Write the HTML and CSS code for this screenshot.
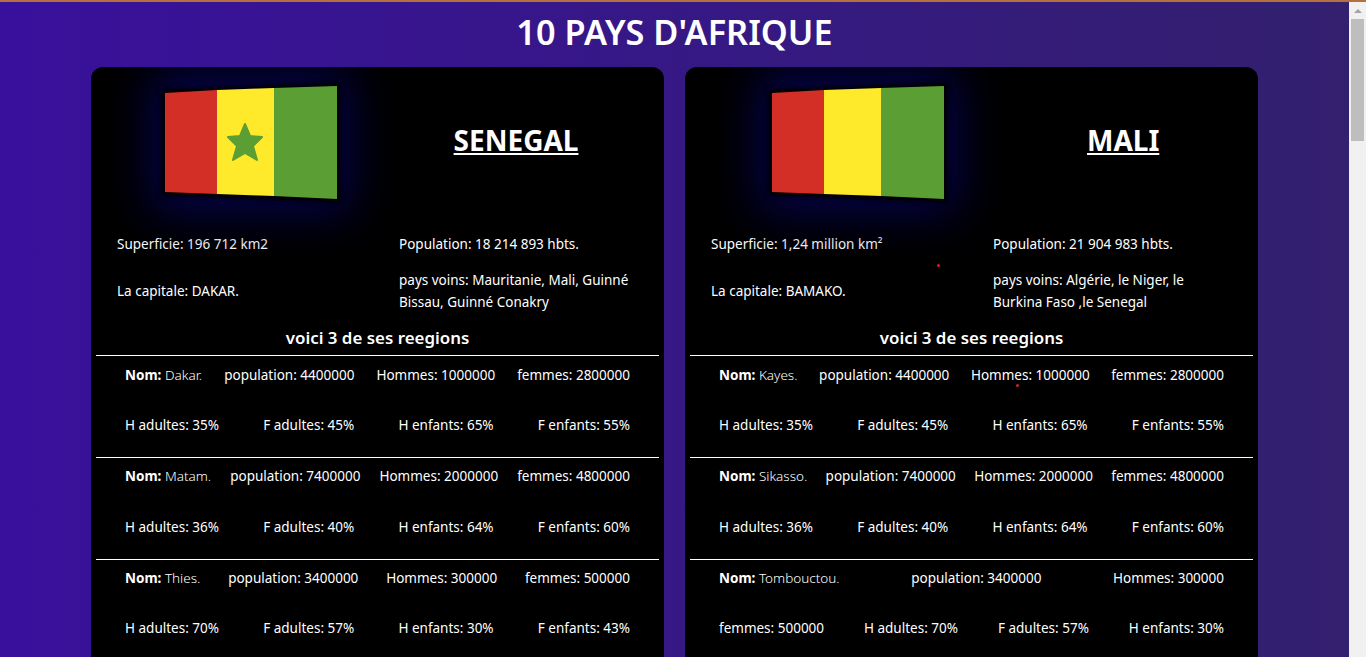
FILE: index.html
```html
<!DOCTYPE html>
<html lang="fr">

<head>
    <meta charset="UTF-8">
    <meta name="viewport" content="width=device-width, initial-scale=1.0">
    <title>10 pays d'Afrique</title>
    <link rel="stylesheet" href="styles.css">
</head>

<body>
    <div class="page">
        <h1 class="page-title">10 PAYS D'AFRIQUE</h1>
        <main class="cards">
            <section class="card">
                <header class="card-head">
                    <div class="flag">
                        <svg viewBox="0 0 172 114" width="172" height="114">
                            <polygon class="flag-ring" points="0,8 172,1 172,114 0,107"/>
                            <polygon points="0,8 52,5 52,109 0,107" fill="#d32f27"/>
                            <polygon points="52,5 109,3 109,111 52,109" fill="#fee92b"/>
                            <polygon points="109,3 172,1 172,114 109,111" fill="#5b9f34"/>
                            <path d="M80 39 L85 51 L97 52 L88 61 L92 75 L80 68 L68 75 L72 61 L63 52 L75 51 Z" fill="#5b9f34" stroke="#5b9f34" stroke-linejoin="round" stroke-width="2"/>
                        </svg>
                    </div>
                    <h2 class="country">SENEGAL</h2>
                </header>
                <div class="facts">
                    <p>Superficie: 196 712 km2</p>
                    <p>Population: 18 214 893 hbts.</p>
                    <p>La capitale: DAKAR.</p>
                    <p>pays voins: Mauritanie, Mali, Guinné Bissau, Guinné Conakry</p>
                </div>
                <h3 class="regions-title">voici 3 de ses reegions</h3>
                <div class="region">
                    <div class="region-row">
                        <span><b>Nom:</b> <i>Dakar.</i></span>
                        <span>population: 4400000</span>
                        <span>Hommes: 1000000</span>
                        <span>femmes: 2800000</span>
                    </div>
                    <div class="region-row">
                        <span>H adultes: 35%</span>
                        <span>F adultes: 45%</span>
                        <span>H enfants: 65%</span>
                        <span>F enfants: 55%</span>
                    </div>
                </div>
                <div class="region">
                    <div class="region-row">
                        <span><b>Nom:</b> <i>Matam.</i></span>
                        <span>population: 7400000</span>
                        <span>Hommes: 2000000</span>
                        <span>femmes: 4800000</span>
                    </div>
                    <div class="region-row">
                        <span>H adultes: 36%</span>
                        <span>F adultes: 40%</span>
                        <span>H enfants: 64%</span>
                        <span>F enfants: 60%</span>
                    </div>
                </div>
                <div class="region">
                    <div class="region-row">
                        <span><b>Nom:</b> <i>Thies.</i></span>
                        <span>population: 3400000</span>
                        <span>Hommes: 300000</span>
                        <span>femmes: 500000</span>
                    </div>
                    <div class="region-row">
                        <span>H adultes: 70%</span>
                        <span>F adultes: 57%</span>
                        <span>H enfants: 30%</span>
                        <span>F enfants: 43%</span>
                    </div>
                </div>
            </section>

            <section class="card">
                <span class="dot dot-one"></span>
                <span class="dot dot-two"></span>
                <header class="card-head">
                    <div class="flag">
                        <svg viewBox="0 0 172 114" width="172" height="114">
                            <polygon class="flag-ring" points="0,8 172,1 172,114 0,107"/>
                            <polygon points="0,8 52,5 52,109 0,107" fill="#d32f27"/>
                            <polygon points="52,5 109,3 109,111 52,109" fill="#fee92b"/>
                            <polygon points="109,3 172,1 172,114 109,111" fill="#5b9f34"/>
                        </svg>
                    </div>
                    <h2 class="country">MALI</h2>
                </header>
                <div class="facts">
                    <p>Superficie: 1,24 million km²</p>
                    <p>Population: 21 904 983 hbts.</p>
                    <p>La capitale: BAMAKO.</p>
                    <p>pays voins: Algérie, le Niger, le Burkina Faso ,le Senegal</p>
                </div>
                <h3 class="regions-title">voici 3 de ses reegions</h3>
                <div class="region">
                    <div class="region-row">
                        <span><b>Nom:</b> <i>Kayes.</i></span>
                        <span>population: 4400000</span>
                        <span>Hommes: 1000000</span>
                        <span>femmes: 2800000</span>
                    </div>
                    <div class="region-row">
                        <span>H adultes: 35%</span>
                        <span>F adultes: 45%</span>
                        <span>H enfants: 65%</span>
                        <span>F enfants: 55%</span>
                    </div>
                </div>
                <div class="region">
                    <div class="region-row">
                        <span><b>Nom:</b> <i>Sikasso.</i></span>
                        <span>population: 7400000</span>
                        <span>Hommes: 2000000</span>
                        <span>femmes: 4800000</span>
                    </div>
                    <div class="region-row">
                        <span>H adultes: 36%</span>
                        <span>F adultes: 40%</span>
                        <span>H enfants: 64%</span>
                        <span>F enfants: 60%</span>
                    </div>
                </div>
                <div class="region">
                    <div class="region-row">
                        <span><b>Nom:</b> <i>Tombouctou.</i></span>
                        <span>population: 3400000</span>
                        <span>Hommes: 300000</span>
                    </div>
                    <div class="region-row">
                        <span>femmes: 500000</span>
                        <span>H adultes: 70%</span>
                        <span>F adultes: 57%</span>
                        <span>H enfants: 30%</span>
                    </div>
                </div>
            </section>
        </main>
    </div>
    <div class="scrollbar">
        <span class="scroll-arrow"></span>
        <span class="scroll-thumb"></span>
    </div>
</body>

</html>
```

FILE: styles.css
```css
* {
    box-sizing: border-box;
}

html,
body {
    height: 100%;
}

body {
    margin: 0;
    display: flex;
    overflow: hidden;
    border-top: 2px solid #b5703f;
    font-family: "Noto Sans", "Open Sans", sans-serif;
    font-size: 13.5px;
    color: #fff;
    background-color: #f1f1f1;
}

.page {
    flex: 1;
    min-width: 0;
    overflow: hidden;
    background: linear-gradient(90deg, #39109c, #33206e);
}

.page-title {
    margin: 0;
    padding-top: 8px;
    height: 65px;
    text-align: center;
    font-size: 34.3px;
    line-height: 44px;
    font-weight: 600;
}

.cards {
    display: grid;
    grid-template-columns: 573px 573px;
    justify-content: center;
    gap: 21px;
}

.card {
    position: relative;
    height: 700px;
    padding: 0 5px;
    overflow: hidden;
    background-color: #000;
    border-radius: 12px 12px 0 0;
}

.card-head {
    display: flex;
    justify-content: space-around;
    align-items: flex-start;
    height: 157px;
    padding: 18px 22px 0 10px;
}

.flag {
    position: relative;
    width: 172px;
    height: 114px;
}

.flag::before {
    content: "";
    position: absolute;
    inset: 4px;
    box-shadow: 0 0 44px 18px #05034a;
}

.flag svg {
    position: relative;
    display: block;
    overflow: visible;
    filter: blur(0.6px);
}

.flag-ring {
    fill: #000;
    stroke: #000;
    stroke-width: 7;
    stroke-linejoin: round;
    filter: blur(2px);
}

.country {
    margin: 0;
    padding-top: 37px;
    font-size: 28px;
    line-height: 36px;
    font-weight: 700;
    text-decoration: underline;
}

.facts {
    display: grid;
    grid-template-columns: 282px 238px;
    align-items: center;
    padding-left: 21px;
    line-height: 22px;
}

.facts p {
    margin: 0;
    padding: 9px 0;
}

.facts p:nth-child(n+3) {
    padding: 5px 0;
}

.regions-title {
    margin: 0;
    height: 38px;
    padding-top: 8px;
    text-align: center;
    font-size: 16.9px;
    line-height: 24px;
    font-weight: 600;
    border-bottom: 1px solid #fff;
}

.region {
    height: 101.9px;
    padding: 7.5px 29px 0;
    border-bottom: 1px solid #fff;
}

.region-row {
    display: flex;
    justify-content: space-between;
    height: 50.15px;
    line-height: 22px;
}

.region-row i {
    font-style: normal;
    font-weight: 300;
}

.dot {
    position: absolute;
    width: 3px;
    height: 3px;
    border-radius: 50%;
    background-color: #d9202a;
}

.dot-one {
    left: 252px;
    top: 197px;
}

.dot-two {
    left: 331px;
    top: 317px;
}

.scrollbar {
    display: flex;
    flex-direction: column;
    align-items: center;
    flex: 0 0 17px;
    padding-top: 7px;
}

.scroll-arrow {
    width: 0;
    height: 0;
    border-left: 4px solid transparent;
    border-right: 4px solid transparent;
    border-bottom: 4px solid #a3a3a3;
}

.scroll-thumb {
    width: 13px;
    height: 122px;
    margin-top: 6px;
    background-color: #bebebe;
}
```
